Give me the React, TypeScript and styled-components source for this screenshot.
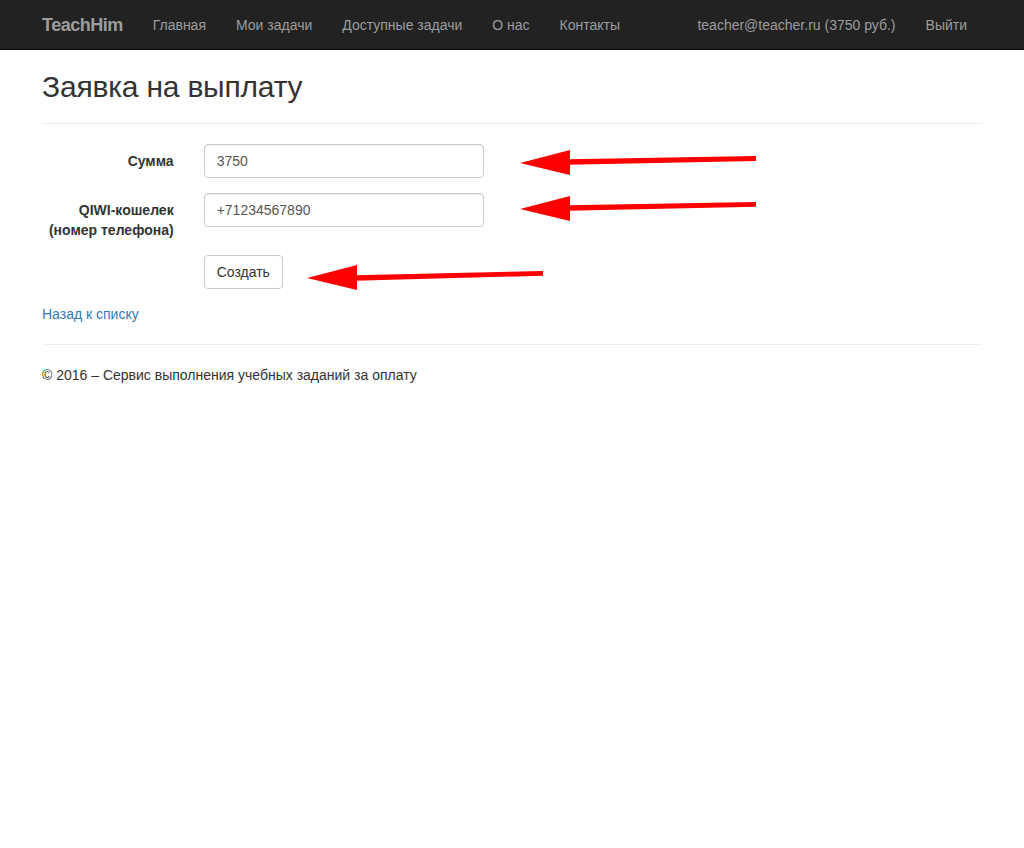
import React from "react";
import styled, { createGlobalStyle } from "styled-components";

const GlobalStyle = createGlobalStyle`
  * { box-sizing: border-box; }
  html, body { margin: 0; padding: 0; background: #fff; }
  body {
    font-family: "Liberation Sans", Arial, Helvetica, sans-serif;
    font-size: 14px;
    line-height: 20px;
    color: #333;
  }
`;

const Page = styled.div`
  position: relative;
  min-height: 848px;
`;

const Navbar = styled.nav`
  height: 50px;
  background: #222;
  border-bottom: 1px solid #080808;
`;

const NavInner = styled.div`
  width: 970px;
  margin: 0 auto;
  padding: 0 15px;
  display: flex;
  justify-content: space-between;
  align-items: stretch;
  height: 100%;
`;

const NavGroup = styled.div`
  display: flex;
  align-items: stretch;
`;

const Brand = styled.a`
  margin-left: -15px;
  padding: 15px;
  font-size: 18px;
  line-height: 20px;
  font-weight: bold;
  letter-spacing: -0.5px;
  color: #9d9d9d;
  text-decoration: none;
`;

const NavList = styled.ul`
  display: flex;
  list-style: none;
  margin: 0;
  padding: 0;
`;

const NavLink = styled.a`
  display: block;
  padding: 15px;
  font-size: 14px;
  line-height: 20px;
  color: #9d9d9d;
  text-decoration: none;
`;

const Container = styled.main`
  width: 940px;
  margin: 0 auto;
`;

const Title = styled.h2`
  margin: 20px 0 10px;
  font-size: 30px;
  line-height: 33px;
  font-weight: 500;
  letter-spacing: -0.2px;
  color: #333;
`;

const Rule = styled.hr`
  margin: 20px 0;
  border: 0;
  border-top: 1px solid #eee;
  height: 0;
`;

const Form = styled.form`
  display: flex;
  flex-direction: column;
  gap: 15px;
  margin-bottom: 15px;
`;

const FormRow = styled.div`
  display: grid;
  grid-template-columns: 131.67px 280px;
  column-gap: 30px;
  align-items: start;
`;

const Label = styled.label`
  padding-top: 7px;
  text-align: right;
  font-weight: bold;
  font-size: 14px;
  line-height: 20px;
  color: #333;
`;

const Input = styled.input`
  display: block;
  width: 280px;
  height: 34px;
  padding: 6px 12px;
  font-family: inherit;
  font-size: 14px;
  line-height: 20px;
  color: #555;
  background: #fff;
  border: 1px solid #ccc;
  border-radius: 4px;
  box-shadow: inset 0 1px 1px rgba(0, 0, 0, 0.075);
  outline: none;
`;

const Button = styled.button`
  justify-self: start;
  height: 34px;
  padding: 6px 12px;
  font-family: inherit;
  font-size: 14px;
  line-height: 20px;
  color: #333;
  background: #fff;
  border: 1px solid #ccc;
  border-radius: 4px;
  cursor: pointer;
`;

const BackLink = styled.a`
  display: inline-block;
  color: #337ab7;
  text-decoration: none;
  line-height: 20px;
`;

const Footer = styled.footer`
  p {
    margin: 0 0 10px;
  }
`;

const Overlay = styled.svg`
  position: absolute;
  top: 0;
  left: 0;
  width: 1024px;
  height: 848px;
  pointer-events: none;
`;

type ArrowProps = {
  tipX: number;
  tipY: number;
  headX: number;
  headTop: number;
  headBottom: number;
  headShaftY: number;
  endX: number;
  endY: number;
};

const Arrow = ({ tipX, tipY, headX, headTop, headBottom, headShaftY, endX, endY }: ArrowProps) => (
  <g fill="#ff0000" stroke="none">
    <polygon points={`${tipX},${tipY} ${headX},${headTop} ${headX},${headBottom}`} />
    <polygon
      points={`${headX - 2},${headShaftY - 2.7} ${endX},${endY - 2.4} ${endX},${endY + 2.4} ${headX - 2},${headShaftY + 2.7}`}
    />
  </g>
);

export default function App() {
  return (
    <Page>
      <GlobalStyle />
      <Navbar>
        <NavInner>
          <NavGroup>
            <Brand href="#">TeachHim</Brand>
            <NavList>
              <li><NavLink href="#">Главная</NavLink></li>
              <li><NavLink href="#">Мои задачи</NavLink></li>
              <li><NavLink href="#">Доступные задачи</NavLink></li>
              <li><NavLink href="#">О нас</NavLink></li>
              <li><NavLink href="#">Контакты</NavLink></li>
            </NavList>
          </NavGroup>
          <NavList>
            <li><NavLink href="#">teacher@teacher.ru (3750 руб.)</NavLink></li>
            <li><NavLink href="#">Выйти</NavLink></li>
          </NavList>
        </NavInner>
      </Navbar>
      <Container>
        <Title>Заявка на выплату</Title>
        <Rule />
        <Form onSubmit={(e) => e.preventDefault()}>
          <FormRow>
            <Label>Сумма</Label>
            <Input defaultValue="3750" />
          </FormRow>
          <FormRow>
            <Label>QIWI-кошелек (номер телефона)</Label>
            <Input defaultValue="+71234567890" />
          </FormRow>
          <FormRow>
            <span />
            <Button type="submit">Создать</Button>
          </FormRow>
        </Form>
        <div>
          <BackLink href="#">Назад к списку</BackLink>
        </div>
        <Rule />
        <Footer>
          <p>© 2016 – Сервис выполнения учебных заданий за оплату</p>
        </Footer>
      </Container>
      <Overlay viewBox="0 0 1024 848">
        <Arrow tipX={520} tipY={163} headX={570} headTop={150} headBottom={175} headShaftY={162} endX={756} endY={158.5} />
        <Arrow tipX={520} tipY={209} headX={570} headTop={196} headBottom={221} headShaftY={208} endX={756} endY={204.3} />
        <Arrow tipX={307} tipY={278} headX={357} headTop={265} headBottom={290} headShaftY={278} endX={543} endY={273.3} />
      </Overlay>
    </Page>
  );
}
